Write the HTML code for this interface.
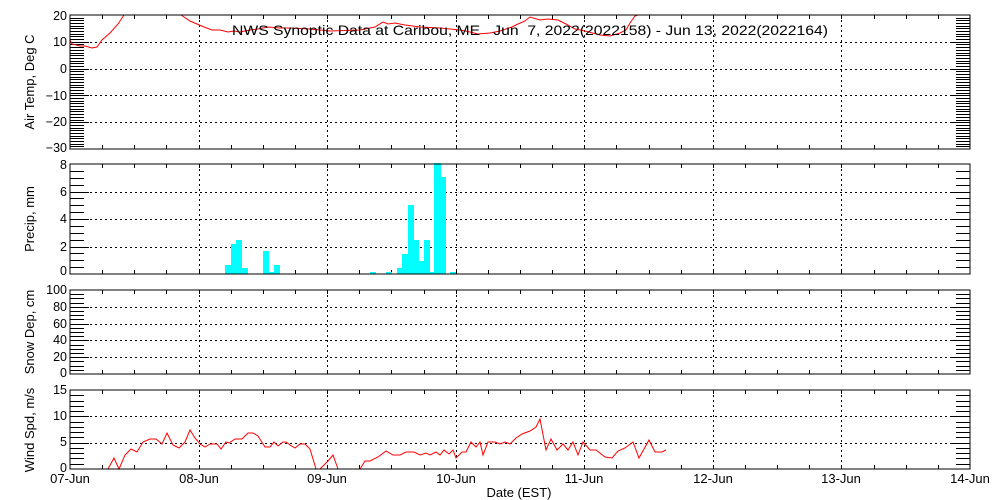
<!DOCTYPE html>
<html><head><meta charset="utf-8"><style>
html,body{margin:0;padding:0;background:#fff;width:1000px;height:500px;overflow:hidden}
svg{display:block}
text{font-family:"Liberation Sans",sans-serif;fill:#000}
</style></head><body>
<svg id="s" width="1000" height="500" viewBox="0 0 1000 500" xmlns="http://www.w3.org/2000/svg">
<g id="grid" stroke="#000" stroke-width="1" stroke-dasharray="2,3" fill="none"></g>
<g id="ticks" stroke="#000" stroke-width="1" fill="none" shape-rendering="crispEdges"></g>
<g fill="#00ffff" shape-rendering="crispEdges">
<rect x="225" y="265" width="6" height="9"/>
<rect x="231" y="244" width="5" height="30"/>
<rect x="236" y="240" width="6" height="34"/>
<rect x="242" y="268" width="6" height="6"/>
<rect x="263" y="251" width="6" height="23"/>
<rect x="269" y="272" width="5" height="2"/>
<rect x="274" y="265" width="6" height="9"/>
<rect x="370" y="272" width="6" height="2"/>
<rect x="386" y="272" width="6" height="2"/>
<rect x="397" y="268" width="5" height="6"/>
<rect x="402" y="254" width="6" height="20"/>
<rect x="408" y="205" width="6" height="69"/>
<rect x="414" y="240" width="5" height="34"/>
<rect x="419" y="261" width="5" height="13"/>
<rect x="424" y="240" width="6" height="34"/>
<rect x="430" y="272" width="4" height="2"/>
<rect x="434" y="163" width="7" height="111"/>
<rect x="441" y="177" width="5" height="97"/>
<rect x="450" y="272" width="6" height="2"/>
</g>
<polyline fill="none" stroke="#ff0000" stroke-width="1" points="70,40 72,44 80,46 85,46 92,48 97,47 102,40 110,33 118,24 124,15"/>
<polyline fill="none" stroke="#ff0000" stroke-width="1" points="181,15 190,21 197,24 204,27 212,30 220,30 228,32 234,31 240,32 250,30 258,29 268,27 280,28 290,28 310,29 330,31 360,30 375,27 383,22 388,24 395,23 405,25 420,27 440,28 460,30 470,32 478,34 490,33 500,31 512,27 518,24 525,21 530,17 540,20 548,19 558,20 566,24 575,29 585,31 600,35 610,36 620,33 626,30 630,23 635,16 638,15"/>
<polyline fill="none" stroke="#ff0000" stroke-width="1" points="108,469 114,458 119,469 125,455 131,449 137,452 143,442 150,439 156,439 162,444 167,433 173,445 179,448 185,442 190,430 195,438 200,444 205,447 210,444 217,444 221,449 226,442 229,443 235,439 242,439 248,433 253,433 258,436 265,447 270,447 274,442 278,446 283,442 286,442 290,445 295,448 300,444 305,444 310,449 316,469 320,469 328,461 333,455 338,469"/>
<polyline fill="none" stroke="#ff0000" stroke-width="1" points="360,469 365,461 370,461 378,457 386,451 393,455 400,455 406,452 414,452 420,455 426,453 430,455 436,452 440,455 444,450 449,454 453,450 456,458 462,452 466,452 471,442 476,447 480,442 483,455 488,442 495,442 500,444 505,442 510,444 516,438 522,434 530,431 536,427 540,419 546,450 551,439 557,450 563,444 568,450 573,442 578,455 583,442 590,450 596,450 605,457 612,458 618,451 625,448 633,442 639,458 649,440 655,452 662,452 666,450"/>
<g fill="none" stroke="#000" stroke-width="1.3" shape-rendering="crispEdges">
<rect x="70" y="15" width="900" height="134"/>
<rect x="70" y="164" width="900" height="110"/>
<rect x="70" y="290" width="900" height="84"/>
<rect x="70" y="390" width="900" height="79"/>
</g>
<text x="232" y="35" font-size="14" textLength="596" lengthAdjust="spacingAndGlyphs" xml:space="preserve">NWS Synoptic Data at Caribou, ME   Jun  7, 2022(2022158) - Jun 13, 2022(2022164)</text>
<g font-size="12.5" text-anchor="end">
<text x="67" y="20">20</text><text x="67" y="46">10</text><text x="67" y="73">0</text><text x="67" y="100">−10</text><text x="67" y="126">−20</text><text x="67" y="152">−30</text>
<text x="67" y="169">8</text><text x="67" y="196">6</text><text x="67" y="223">4</text><text x="67" y="251">2</text><text x="67" y="275">0</text>
<text x="67" y="294">100</text><text x="67" y="311">80</text><text x="67" y="328">60</text><text x="67" y="344">40</text><text x="67" y="361">20</text><text x="67" y="377">0</text>
<text x="67" y="394">15</text><text x="67" y="420">10</text><text x="67" y="446">5</text><text x="67" y="472">0</text>
</g>
<g font-size="13" text-anchor="middle">
<text transform="translate(34,82) rotate(-90)">Air Temp, Deg C</text>
<text transform="translate(34,219) rotate(-90)">Precip, mm</text>
<text transform="translate(34,332) rotate(-90)">Snow Dep, cm</text>
<text transform="translate(34,430) rotate(-90)">Wind Spd, m/s</text>
<text x="70" y="483">07-Jun</text><text x="199" y="483">08-Jun</text><text x="327" y="483">09-Jun</text><text x="456" y="483">10-Jun</text><text x="584" y="483">11-Jun</text><text x="713" y="483">12-Jun</text><text x="841" y="483">13-Jun</text><text x="970" y="483">14-Jun</text>
<text x="519" y="497">Date (EST)</text>
</g>
</svg>
<script>
(function(){
var g=document.getElementById('grid'),t=document.getElementById('ticks');
var P=[[15,149,50,10],[164,274,16,4],[290,374,20,4],[390,469,15,5]];
var d='',gd='';
P.forEach(function(p){
 var top=p[0],bot=p[1],n=p[2],m=p[3],s=(bot-top)/n;
 for(var i=1;i<n;i++){var y=Math.round(bot-i*s)+0.5;var L=(i%m==0)?19:14;
  d+='M70,'+y+'h'+L+'M970,'+y+'h-'+L;
  if(i%m==0) gd+='M70,'+y+'H970';}
 for(var k=1;k<28;k++){var x=Math.round(70+k*900/28)+0.5;
  if(k%4==0){gd+='M'+x+','+top+'V'+bot;}
  d+='M'+x+','+top+'v4M'+x+','+bot+'v-4';}
});
var a=document.createElementNS('http://www.w3.org/2000/svg','path');a.setAttribute('d',d);t.appendChild(a);
var b=document.createElementNS('http://www.w3.org/2000/svg','path');b.setAttribute('d',gd);g.appendChild(b);
})();
</script>
</body></html>
